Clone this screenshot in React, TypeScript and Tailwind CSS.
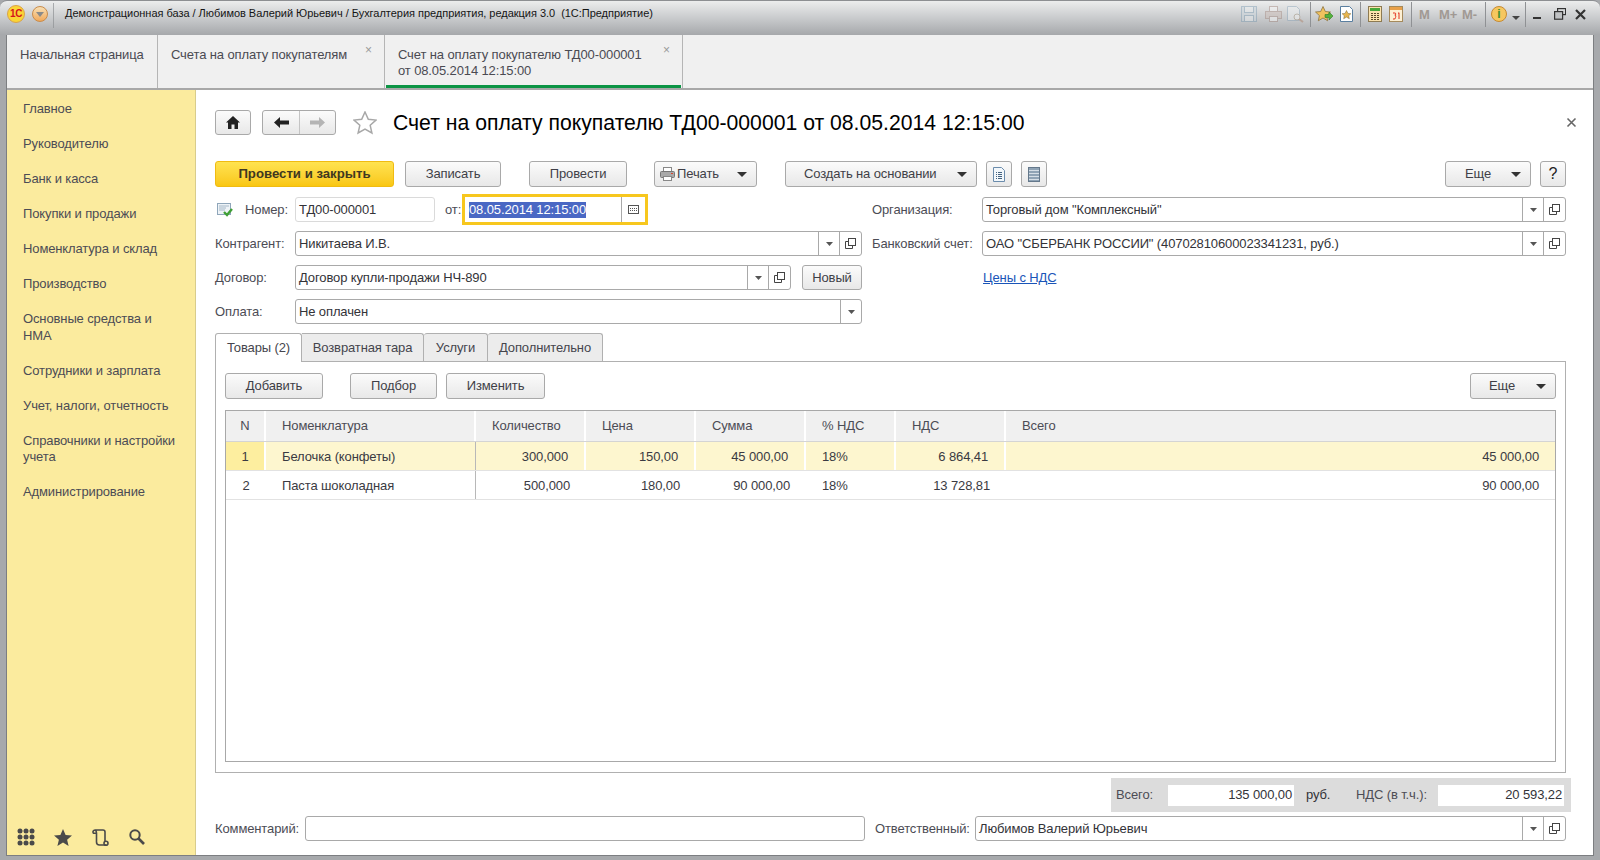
import React from "react";

const FONT = "font-['Liberation_Sans',Arial,sans-serif]";

function Caret({ small }: { small?: boolean }) {
  return small ? (
    <svg width="7" height="4" viewBox="0 0 7 4"><path d="M0 0h7L3.5 4z" fill="#555" /></svg>
  ) : (
    <svg width="10" height="5" viewBox="0 0 10 5"><path d="M0 0h10L5 5z" fill="#333" /></svg>
  );
}

function OpenIcon() {
  return (
    <svg width="13" height="13" viewBox="0 0 13 13" fill="none" stroke="#444" strokeWidth="1">
      <rect x="4.5" y="1.5" width="7" height="7" />
      <path d="M4.5 4.5h-3v7h7v-3" />
    </svg>
  );
}

function Btn({ children, className = "" }: { children?: React.ReactNode; className?: string }) {
  return (
    <div className={`h-[26px] shrink-0 flex items-center justify-center rounded-[3px] border border-[#a9a9a9] bg-gradient-to-b from-[#fbfbfb] to-[#e8e8e8] text-[13px] text-[#3f3f47] ${className}`}>
      {children}
    </div>
  );
}

function MenuBtn({ label, className = "", pad = "pl-[18px]", icon }: { label: string; className?: string; pad?: string; icon?: React.ReactNode }) {
  return (
    <div className={`h-[26px] shrink-0 flex items-center rounded-[3px] border border-[#a9a9a9] bg-gradient-to-b from-[#fbfbfb] to-[#e8e8e8] text-[13px] text-[#3f3f47] pr-[9px] ${pad} ${className}`}>
      {icon}
      <span>{label}</span>
      <span className="ml-auto flex"><Caret /></span>
    </div>
  );
}

function Field({ value, drop, open, className = "" }: { value: string; drop?: boolean; open?: boolean; className?: string }) {
  return (
    <div className={`h-[25px] flex items-stretch rounded-[3px] border border-[#a9a9a9] bg-white text-[13px] text-[#333338] ${className}`}>
      <div className="flex-1 min-w-0 pl-[3px] flex items-center whitespace-nowrap overflow-hidden">{value}</div>
      {drop && <div className="w-[21px] border-l border-[#a9a9a9] flex items-center justify-center"><Caret small /></div>}
      {open && <div className="w-[22px] border-l border-[#a9a9a9] flex items-center justify-center"><OpenIcon /></div>}
    </div>
  );
}

function Label({ children, className = "" }: { children: React.ReactNode; className?: string }) {
  return <div className={`shrink-0 flex items-center text-[13px] text-[#4c4c55] whitespace-nowrap ${className}`}>{children}</div>;
}

const Sep = ({ className = "" }: { className?: string }) => <div className={`w-px h-[25px] bg-[#8f9194] shrink-0 ${className}`} />;

function TitleBar() {
  return (
    <div className="h-[35px] shrink-0 flex items-start rounded-t-[7px] bg-gradient-to-b from-[#eceded] via-[#c9cbcd] to-[#a6a8ab] border-t border-[#8d8f92] tracking-normal">
      <div className="ml-[7px] mt-[4px] w-[18px] h-[18px] rounded-full bg-[#fbd535] border border-[#d9a24a] flex items-center justify-center overflow-hidden">
        <span className="text-[10px] font-bold text-[#d5161c] leading-none tracking-[-0.5px]">1С</span>
      </div>
      <div className="ml-[7px] mt-[5px] w-[16px] h-[16px] rounded-full bg-gradient-to-b from-[#f7e0b4] to-[#f1a95a] border border-[#c98b4a] flex items-center justify-center">
        <svg width="8" height="5" viewBox="0 0 8 5"><path d="M0 0h8L4 5z" fill="#8a8a8a" /></svg>
      </div>
      <Sep className="ml-[5px] mt-[2px] opacity-70" />
      <div className="ml-[11px] mt-[5px] text-[11px] tracking-[-0.03px] leading-[15px] text-[#151515] whitespace-pre">
        Демонстрационная база / Любимов Валерий Юрьевич / Бухгалтерия предприятия, редакция 3.0  (1С:Предприятие)
      </div>
      <div className="ml-auto flex items-center h-[26px] pr-[14px]">
        <div className="flex items-center opacity-40">
          <svg width="16" height="16" viewBox="0 0 16 16" fill="none" stroke="#6f93ad"><rect x=".5" y=".5" width="15" height="15" fill="#c9d6de" /><rect x="3.5" y=".5" width="9" height="6" fill="#eef2f4" /><rect x="3.5" y="9.5" width="9" height="6" fill="#eef2f4" /></svg>
          <svg className="ml-[8px]" width="17" height="16" viewBox="0 0 17 16" fill="none" stroke="#9b7b70"><rect x="4.5" y=".5" width="8" height="5" fill="#fff" /><rect x=".5" y="5.5" width="16" height="7" fill="#cbb8b0" /><rect x="4.5" y="10.5" width="8" height="5" fill="#fff" /></svg>
          <svg className="ml-[5px]" width="17" height="17" viewBox="0 0 17 17" fill="none" stroke="#7f9db5"><path d="M.5.5h9l3 3v11h-12z" fill="#f2f5f7" /><circle cx="10" cy="11" r="3" fill="#fff" stroke="#9b8a70" /><path d="M12 13l4 3" stroke="#a9765a" strokeWidth="2" /></svg>
        </div>
        <Sep className="ml-[6px] h-[24px]" />
        <svg className="ml-[4px]" width="18" height="17" viewBox="0 0 18 17"><path d="M8 .5l2.3 5 5.2.5-3.9 3.6 1.1 5.2L8 12l-4.7 2.8 1.1-5.2L.5 6l5.200-.5z" fill="#f1c25e" stroke="#8d7440" strokeWidth=".8" /><path d="M10 8.5h4V6l4 4-4 4v-2.5h-4z" fill="#54b13c" stroke="#2f7d22" strokeWidth=".6" /></svg>
        <svg className="ml-[7px]" width="13" height="16" viewBox="0 0 13 16"><path d="M.5.5h9l3 3v12H.5z" fill="#fff" stroke="#5a7fa0" /><path d="M6.5 4.5l1.4 2.9 3 .3-2.2 2 .6 3-2.8-1.6-2.8 1.6.6-3-2.2-2 3-.3z" fill="#e9b54c" stroke="#7c6632" strokeWidth=".5" /></svg>
        <Sep className="ml-[7px] h-[24px]" />
        <svg className="ml-[7px]" width="14" height="16" viewBox="0 0 14 16"><rect x=".5" y=".5" width="13" height="15" fill="#fbe3ae" stroke="#8d7a52" /><rect x="2" y="2" width="10" height="3" fill="#46a83a" /><path d="M3 7h2v1H3zM6 7h2v1H6zM9 7h2v1H9zM3 9h2v1H3zM6 9h2v1H6zM9 9h2v1H9zM3 11h2v1H3zM6 11h2v1H6zM9 11h2v1H9zM3 13h2v1H3zM6 13h2v1H6zM9 13h2v1H9z" fill="#5a4a2a" /></svg>
        <svg className="ml-[7px]" width="14" height="16" viewBox="0 0 14 16"><rect x=".5" y=".5" width="13" height="15" fill="#fdf0d4" stroke="#a58a5c" /><rect x="1" y="1" width="12" height="3" fill="#e9a14a" /><path d="M4 7h1.8q1 0 1 1t-1 1q1 0 1 1.2T5.800 13H4M9 7.500l1-.8V13" fill="none" stroke="#e3301c" strokeWidth="1" /></svg>
        <Sep className="ml-[8px] h-[24px]" />
        <div className="flex items-center ml-[7px] text-[13px] font-bold text-[#8c8178] opacity-70 leading-none">
          <span className="w-[20px]">M</span>
          <span className="w-[23px]">M+</span>
          <span className="w-[23px]">M-</span>
        </div>
        <Sep className="h-[24px]" />
        <div className="ml-[5px] w-[16px] h-[16px] rounded-full bg-[#f6c75f] border border-[#c68a32] flex items-center justify-center text-[12px] leading-none font-bold text-[#3f8f2e]">i</div>
        <svg className="ml-[5px] mt-[7px]" width="8" height="4" viewBox="0 0 8 4"><path d="M0 0h8L4 4z" fill="#444" /></svg>
        <Sep className="ml-[5px] h-[24px]" />
        <svg className="ml-[7px]" width="8" height="12" viewBox="0 0 8 12"><rect y="9" width="8" height="2" fill="#333" /></svg>
        <svg className="ml-[13px]" width="12" height="12" viewBox="0 0 12 12" fill="none" stroke="#333" strokeWidth="1.2"><rect x="3.600" y=".6" width="8" height="6" /><rect x=".6" y="3.600" width="8" height="7.600" fill="#c0c2c4" /></svg>
        <svg className="ml-[9px]" width="11" height="11" viewBox="0 0 11 11" fill="none" stroke="#333" strokeWidth="2.200"><path d="M1 1l9 9M10 1l-9 9" /></svg>
      </div>
    </div>
  );
}

function TabStrip() {
  return (
    <div className="h-[55px] shrink-0 flex bg-[#f0f0f0] border-b-2 border-[#a8a8a8] text-[13px] text-[#4a4a52]">
      <div className="w-[151px] border-r border-[#b5b5b5] pl-[13px] pt-[10px] whitespace-nowrap">Начальная страница</div>
      <div className="w-[227px] border-r border-[#b5b5b5] pl-[13px] pt-[10px] whitespace-nowrap relative flex">
        <span>Счета на оплату покупателям</span>
        <span className="absolute right-[12px] top-[9px] text-[12px] leading-none text-[#9a9a9a]">×</span>
      </div>
      <div className="w-[298px] border-r border-[#b5b5b5] pl-[13px] pt-[12px] leading-[16px] relative whitespace-nowrap">
        <div>Счет на оплату покупателю ТД00-000001</div>
        <div>от 08.05.2014 12:15:00</div>
        <span className="absolute right-[12px] top-[9px] text-[12px] leading-none text-[#9a9a9a]">×</span>
        <div className="absolute left-[1px] right-[1px] bottom-0 h-[3px] bg-[#0b9444]" />
      </div>
    </div>
  );
}

const MENU: string[] = [
  "Главное", "Руководителю", "Банк и касса", "Покупки и продажи",
  "Номенклатура и склад", "Производство", "Основные средства и НМА",
  "Сотрудники и зарплата", "Учет, налоги, отчетность", "Справочники и настройки учета", "Администрирование",
];

function Sidebar() {
  return (
    <div className="w-[189px] shrink-0 bg-[#fbeb9e] border-r border-[#d8cc8c] flex flex-col pt-[2px] pb-[9px] text-[13px] text-[#4c4c55]">
      {MENU.map((m) => (
        <div key={m} className="pl-[16px] pr-[12px] py-[9.250px] leading-[16.500px]">{m}</div>
      ))}
      <div className="mt-auto pl-[10px] flex items-center">
        <svg width="18" height="18" viewBox="0 0 18 18" fill="#4a4a4a">
          {[3, 9, 15].map((y) => [3, 9, 15].map((x) => <circle key={`${x}-${y}`} cx={x} cy={y} r="2.500" />))}
        </svg>
        <svg className="ml-[19px]" width="18" height="17" viewBox="0 0 18 17"><path d="M9 0l2.600 6 6.400.5-4.900 4.200 1.500 6.300L9 13.600 3.400 17l1.500-6.300L0 6.500 6.400 6z" fill="#4a4a4a" /></svg>
        <svg className="ml-[20px]" width="17" height="17" viewBox="0 0 17 17" fill="none" stroke="#4a4a4a" strokeWidth="1.600"><path d="M3 1h8q2 0 2 2v10M3 1a2 2 0 0 0-1.500 3.300H4M3 1q1.500.5 1.500 3v9q0 3 3 3h7" /><circle cx="14" cy="14.200" r="2" /></svg>
        <svg className="ml-[20px]" width="16" height="16" viewBox="0 0 16 16" fill="none" stroke="#4a4a4a"><circle cx="6" cy="6" r="4.700" strokeWidth="2" /><path d="M9.500 9.500L15 15" strokeWidth="2.600" /></svg>
      </div>
    </div>
  );
}

function Header() {
  return (
    <div className="h-[25px] flex items-center">
      <div className="w-[36px] h-[25px] flex items-center justify-center rounded-[3px] border border-[#a9a9a9] bg-gradient-to-b from-[#fbfbfb] to-[#e8e8e8]">
        <svg width="14" height="13" viewBox="0 0 14 13"><path d="M7 0l7 6.500h-2V13H8.500V8.500h-3V13H2V6.500H0z" fill="#222" /></svg>
      </div>
      <div className="ml-[11px] w-[74px] h-[25px] flex rounded-[3px] border border-[#a9a9a9] bg-gradient-to-b from-[#fbfbfb] to-[#e8e8e8]">
        <div className="w-[37px] border-r border-[#c4c4c4] flex items-center justify-center">
          <svg width="15" height="11" viewBox="0 0 15 11"><path d="M0 5.500L6 0v3.500h9v4H6V11z" fill="#222" /></svg>
        </div>
        <div className="flex-1 flex items-center justify-center">
          <svg width="15" height="11" viewBox="0 0 15 11"><path d="M15 5.500L9 0v3.500H0v4h9V11z" fill="#b4b4b4" /></svg>
        </div>
      </div>
      <svg className="ml-[17px]" width="24" height="24" viewBox="0 0 24 24"><path d="M12 1l3.300 7.300 7.700.8-5.800 5.200 1.700 7.700L12 18.100 5.100 22l1.700-7.700L1 9.100l7.700-.8z" fill="#fff" stroke="#a8a8a8" strokeWidth="1.500" /></svg>
      <div className="ml-[16px] text-[21.200px] tracking-normal text-black whitespace-nowrap">Счет на оплату покупателю ТД00-000001 от 08.05.2014 12:15:00</div>
      <svg className="ml-auto -mr-[11px]" width="11" height="11" viewBox="0 0 11 11" fill="none" stroke="#666" strokeWidth="1.600"><path d="M1.500 1.500l8 8M9.500 1.500l-8 8" /></svg>
    </div>
  );
}

function Commands() {
  return (
    <div className="mt-[26px] flex items-center">
      <div className="w-[179px] h-[26px] flex items-center justify-center rounded-[3px] border border-[#f0bb12] bg-gradient-to-b from-[#ffe34f] to-[#f9c70f] text-[13.200px] tracking-normal font-bold text-[#40381f]">Провести и закрыть</div>
      <Btn className="ml-[11px] w-[96px]">Записать</Btn>
      <Btn className="ml-[28px] w-[98px]">Провести</Btn>
      <MenuBtn
        label="Печать"
        className="ml-[27px] w-[103px]"
        pad="pl-[5px]"
        icon={
          <svg className="mr-[2px]" width="15" height="14" viewBox="0 0 15 14"><rect x="3.500" y=".5" width="8" height="4" fill="#fff" stroke="#888" /><rect x=".5" y="4.500" width="14" height="6" rx="1" fill="#a9a9a9" stroke="#777" /><rect x="3.500" y="9.500" width="8" height="4" fill="#fff" stroke="#888" /><rect x="11" y="6" width="2" height="1" fill="#d9442e" /></svg>
        }
      />
      <MenuBtn label="Создать на основании" className="ml-[28px] w-[192px]" />
      <Btn className="ml-[9px] w-[26px]">
        <svg width="12" height="15" viewBox="0 0 12 15"><path d="M.5.5h8l3 3v11H.5z" fill="#f2f7fb" stroke="#6b8cac" /><path d="M3 5h1v1H3zM5 5h4v1H5zM3 7h1v1H3zM5 7h4v1H5zM3 9h1v1H3zM5 9h4v1H5zM3 11h1v1H3zM5 11h4v1H5z" fill="#44627f" /></svg>
      </Btn>
      <Btn className="ml-[9px] w-[26px]">
        <svg width="12" height="15" viewBox="0 0 12 15"><rect x=".5" y=".5" width="11" height="14" fill="#8fa3b5" stroke="#64788b" /><path d="M1 3.500h10M1 6.500h10M1 9.500h10M1 12.500h10" stroke="#d5dee6" /></svg>
      </Btn>
      <MenuBtn label="Еще" className="ml-auto w-[86px]" pad="pl-[19px]" />
      <Btn className="ml-[9px] w-[26px] !text-[#222] !text-[16px]">?</Btn>
    </div>
  );
}

function Form() {
  return (
    <div className="mt-[10px] flex">
      <div className="w-[647px] shrink-0 flex flex-col gap-[9px]">
        <div className="h-[25px] flex items-center">
          <svg className="ml-[2px] shrink-0" width="16" height="14" viewBox="0 0 16 14"><rect x=".5" y=".5" width="13" height="11" fill="#eef3f7" stroke="#8fa6ba" /><path d="M2 3h10M2 5h7M2 7h6" stroke="#a6b8c7" /><path d="M7 9l3 3 5-6" fill="none" stroke="#3f9f35" strokeWidth="2.400" /></svg>
          <Label className="ml-[12px] w-[50px]">Номер:</Label>
          <div className="w-[140px] h-[25px] shrink-0 flex items-center rounded-[3px] border border-[#dadada] pl-[3px] text-[13px] text-[#333338]">ТД00-000001</div>
          <Label className="ml-[10px] w-[17px]">от:</Label>
          <div className="w-[186px] h-[31px] -my-[3px] shrink-0 flex items-center border-[3px] border-[#f7c71e] bg-white text-[13px]">
            <div className="flex-1 pl-[4px] flex items-center"><span className="bg-[#4a68c4] text-white leading-[16px] whitespace-nowrap">08.05.2014 12:15:00</span></div>
            <div className="w-[24px] h-[25px] border-l border-[#a9a9a9] flex items-center justify-center">
              <svg width="11" height="9" viewBox="0 0 11 9"><rect x=".5" y=".5" width="10" height="8" fill="#fff" stroke="#555" /><path d="M2 3h1v1H2zM4 3h1v1H4zM6 3h1v1H6zM8 3h1v1H8zM2 5h1v1H2zM4 5h1v1H4zM6 5h1v1H6zM8 5h1v1H8z" fill="#555" /></svg>
            </div>
          </div>
        </div>
        <div className="h-[25px] flex">
          <Label className="w-[80px]">Контрагент:</Label>
          <Field className="flex-1" value="Никитаева И.В." drop open />
        </div>
        <div className="h-[25px] flex">
          <Label className="w-[80px]">Договор:</Label>
          <Field className="w-[496px]" value="Договор купли-продажи НЧ-890" drop open />
          <Btn className="ml-[11px] w-[60px] !h-[25px]">Новый</Btn>
        </div>
        <div className="h-[25px] flex">
          <Label className="w-[80px]">Оплата:</Label>
          <Field className="flex-1" value="Не оплачен" drop />
        </div>
      </div>
      <div className="ml-[10px] flex-1 flex flex-col gap-[9px]">
        <div className="h-[25px] flex">
          <Label className="w-[110px]">Организация:</Label>
          <Field className="flex-1" value={'Торговый дом "Комплексный"'} drop open />
        </div>
        <div className="h-[25px] flex">
          <Label className="w-[110px]">Банковский счет:</Label>
          <Field className="flex-1" value={'ОАО "СБЕРБАНК РОССИИ" (40702810600023341231, руб.)'} drop open />
        </div>
        <div className="h-[25px] flex items-center pl-[111px] text-[13px] text-[#1a55b8] underline">Цены с НДС</div>
      </div>
    </div>
  );
}

function TabsRow() {
  return (
    <div className="mt-[9px] h-[29px] flex text-[13px] text-[#45454d] relative z-10">
      <div className="w-[87px] h-[29px] flex items-center justify-center rounded-t-[3px] border border-b-0 border-[#b0b0b0] bg-white">Товары (2)</div>
      <div className="w-[122px] h-[28px] flex items-center justify-center border-t border-r border-[#b0b0b0] bg-[#ececec] rounded-tr-[3px]">Возвратная тара</div>
      <div className="w-[64px] h-[28px] flex items-center justify-center border-t border-r border-[#b0b0b0] bg-[#ececec] rounded-t-[3px]">Услуги</div>
      <div className="w-[115px] h-[28px] flex items-center justify-center border-t border-r border-[#b0b0b0] bg-[#ececec] rounded-t-[3px]">Дополнительно</div>
    </div>
  );
}

const COLS = "grid grid-cols-[40px_210px_110px_110px_110px_90px_110px_1fr]";
const HEAD = ["N", "Номенклатура", "Количество", "Цена", "Сумма", "% НДС", "НДС", "Всего"];
const ROWS = [
  ["1", "Белочка (конфеты)", "300,000", "150,00", "45 000,00", "18%", "6 864,41", "45 000,00"],
  ["2", "Паста шоколадная", "500,000", "180,00", "90 000,00", "18%", "13 728,81", "90 000,00"],
];

function Table() {
  return (
    <div className="mt-[11px] flex-1 min-h-0 border border-[#a8a8a8] bg-white text-[13px] text-[#3a3a42]">
      <div className={`${COLS} h-[31px] bg-[#f0f0f0] border-b border-[#d4d4d4] text-[#4c4c55]`}>
        {HEAD.map((h, i) => (
          <div key={h} className={`flex items-center border-r-2 border-white last:border-r-0 ${i === 0 ? "justify-center" : "pl-[16px]"}`}>{h}</div>
        ))}
      </div>
      {ROWS.map((r, ri) => (
        <div key={r[0]} className={`${COLS} h-[29px] border-b border-[#e2e2e2] ${ri === 0 ? "bg-[#fdf6cf]" : "bg-white"}`}>
          {r.map((c, i) => (
            <div
              key={i}
              className={`flex items-center pt-px ${
                i === 0 ? `justify-center ${ri === 0 ? "bg-[#fdee9f]" : ""}` : i === 1 || i === 5 ? "pl-[16px]" : "justify-end pr-[16px]"
              } ${i === 1 ? "border-r border-[#b8b8b8]" : ri === 0 && i < 7 ? "border-r-2 border-white" : ""}`}
            >
              {c}
            </div>
          ))}
        </div>
      ))}
    </div>
  );
}

function Panel() {
  return (
    <div className="-mt-px flex-1 min-h-0 flex flex-col border border-[#b0b0b0] pl-[9px] pr-[9px] pt-[11px] pb-[10px]">
      <div className="flex items-center">
        <Btn className="w-[98px]">Добавить</Btn>
        <Btn className="ml-[27px] w-[87px]">Подбор</Btn>
        <Btn className="ml-[9px] w-[99px]">Изменить</Btn>
        <MenuBtn label="Еще" className="ml-auto w-[86px]" />
      </div>
      <Table />
    </div>
  );
}

function Footer() {
  return (
    <>
      <div className="mt-[5px] -mr-[5px] self-end w-[460px] h-[34px] flex items-center bg-[#dcdcdc] text-[13px] text-[#4c4c55]">
        <div className="ml-[5px] w-[52px]">Всего:</div>
        <div className="w-[126px] h-[21px] bg-white flex items-center justify-end pr-[2px] text-[#333338]">135 000,00</div>
        <div className="ml-[12px] w-[50px] text-[#333338]">руб.</div>
        <div className="w-[82px] whitespace-nowrap">НДС (в т.ч.):</div>
        <div className="w-[126px] h-[21px] bg-white flex items-center justify-end pr-[2px] text-[#333338]">20 593,22</div>
      </div>
      <div className="mt-[4px] h-[25px] flex">
        <Label className="w-[90px]">Комментарий:</Label>
        <div className="w-[560px] h-[25px] rounded-[3px] border border-[#a9a9a9]" />
        <Label className="ml-[10px] w-[100px]">Ответственный:</Label>
        <Field className="flex-1" value="Любимов Валерий Юрьевич" drop open />
      </div>
    </>
  );
}

export default function App() {
  return (
    <div className={`${FONT} tracking-[-0.12px] w-[1600px] h-[860px] overflow-hidden flex flex-col bg-[#a7a9ac]`}>
      <TitleBar />
      <div className="flex-1 min-h-0 flex flex-col ml-[6px] mr-[6px] mb-[5px] border-l border-r border-[#7c7e81] shadow-[0_1px_0_#7c7e81]">
        <TabStrip />
        <div className="flex-1 min-h-0 flex">
          <Sidebar />
          <div className="flex-1 min-w-0 bg-white flex flex-col pl-[19px] pr-[27px] pt-[20px] pb-[14px]">
            <Header />
            <Commands />
            <Form />
            <TabsRow />
            <Panel />
            <Footer />
          </div>
        </div>
      </div>
    </div>
  );
}
